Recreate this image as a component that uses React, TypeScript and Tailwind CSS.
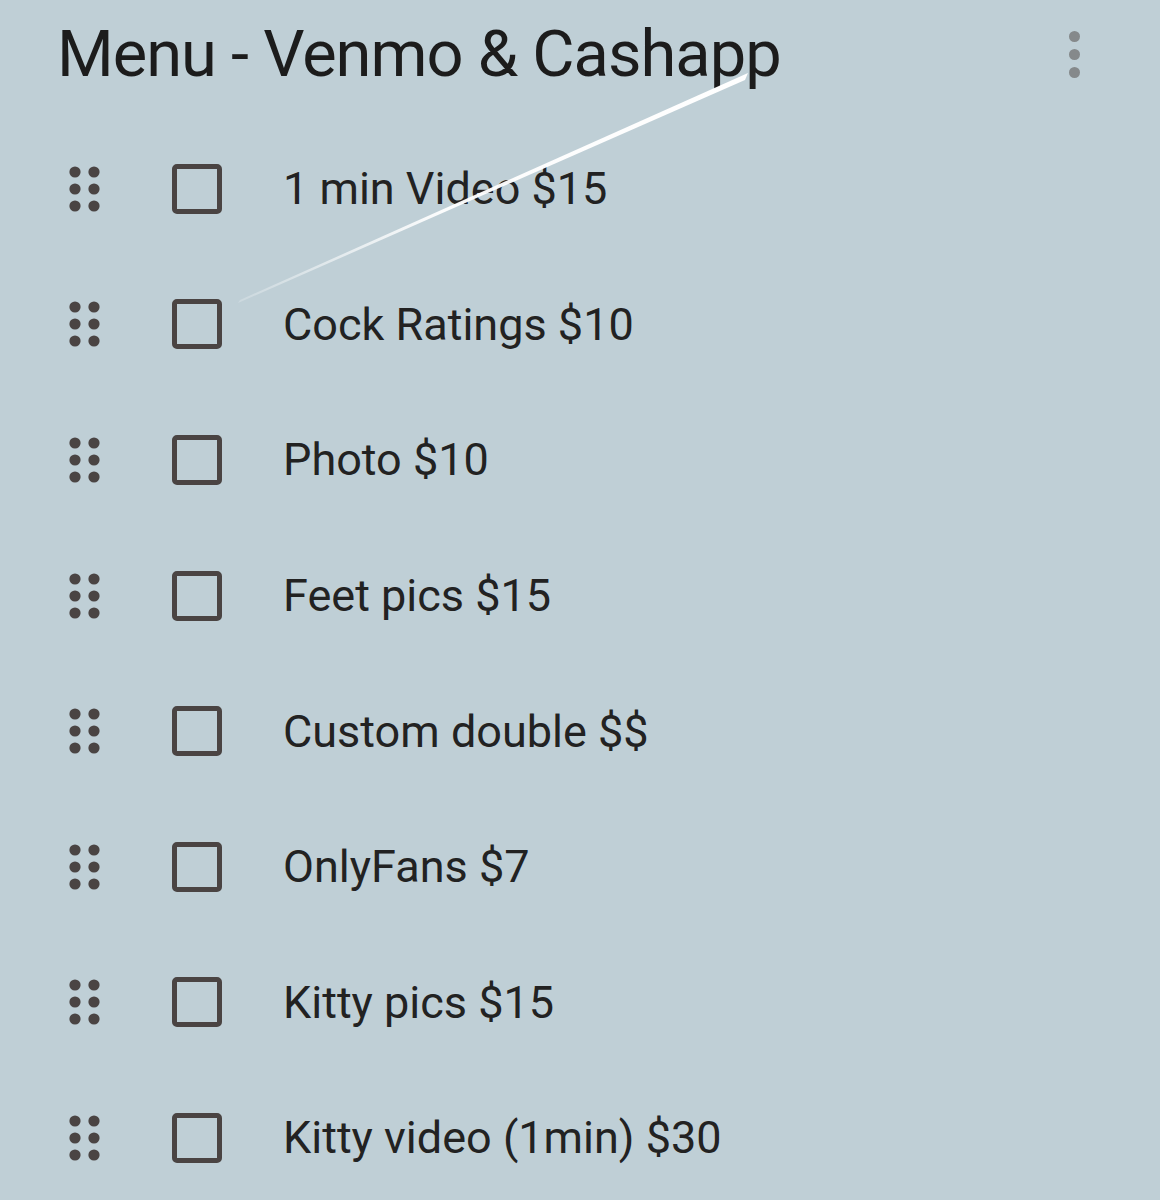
import React from "react";

const items = [
  "1 min Video $15",
  "Cock Ratings $10",
  "Photo $10",
  "Feet pics $15",
  "Custom double $$",
  "OnlyFans $7",
  "Kitty pics $15",
  "Kitty video (1min) $30",
];

function Handle() {
  return (
    <svg width="32" height="46" viewBox="0 0 32 46" className="shrink-0">
      {[0, 1, 2].map((r) =>
        [0, 1].map((c) => (
          <circle key={`${r}-${c}`} cx={6 + c * 19} cy={6 + r * 17} r="5.6" fill="#4a4443" />
        ))
      )}
    </svg>
  );
}

export default function App() {
  return (
    <div className="relative w-[1160px] h-[1200px] overflow-hidden bg-[#bfcfd6]" style={{ fontFamily: "Roboto, 'Liberation Sans', sans-serif" }}>
      <div className="flex items-center justify-between h-[121px] pl-[57px] pr-[80px] pb-[12px]">
        <div className="text-[65px] leading-none text-[#1c1c1c] tracking-[-1px]" style={{ fontFamily: "Roboto, 'Liberation Sans', sans-serif" }}>
          Menu - Venmo &amp; Cashapp
        </div>
        <div className="flex flex-col gap-[7px]">
          <span className="block w-[11px] h-[11px] rounded-full bg-[#85898b]" />
          <span className="block w-[11px] h-[11px] rounded-full bg-[#85898b]" />
          <span className="block w-[11px] h-[11px] rounded-full bg-[#85898b]" />
        </div>
      </div>
      <div className="flex flex-col">
        {items.map((t) => (
          <div key={t} className="flex items-center h-[135.6px] pl-[69px]">
            <Handle />
            <div className="ml-[71px] w-[50px] h-[50px] border-[5px] border-[#4a4443] rounded-[5px] shrink-0" />
            <div className="ml-[61px] text-[45px] leading-none text-[#222222]">{t}</div>
          </div>
        ))}
      </div>
      <svg className="absolute left-0 top-0 pointer-events-none" width="1160" height="1200">
        <defs>
          <linearGradient id="g" x1="745" y1="76" x2="238" y2="302" gradientUnits="userSpaceOnUse">
            <stop offset="0" stopColor="#ffffff" stopOpacity="1" />
            <stop offset="0.6" stopColor="#ffffff" stopOpacity="0.95" />
            <stop offset="1" stopColor="#ffffff" stopOpacity="0.2" />
          </linearGradient>
        </defs>
        <polygon points="748,73 745,80 238,303 240,300" fill="url(#g)" />
      </svg>
    </div>
  );
}
